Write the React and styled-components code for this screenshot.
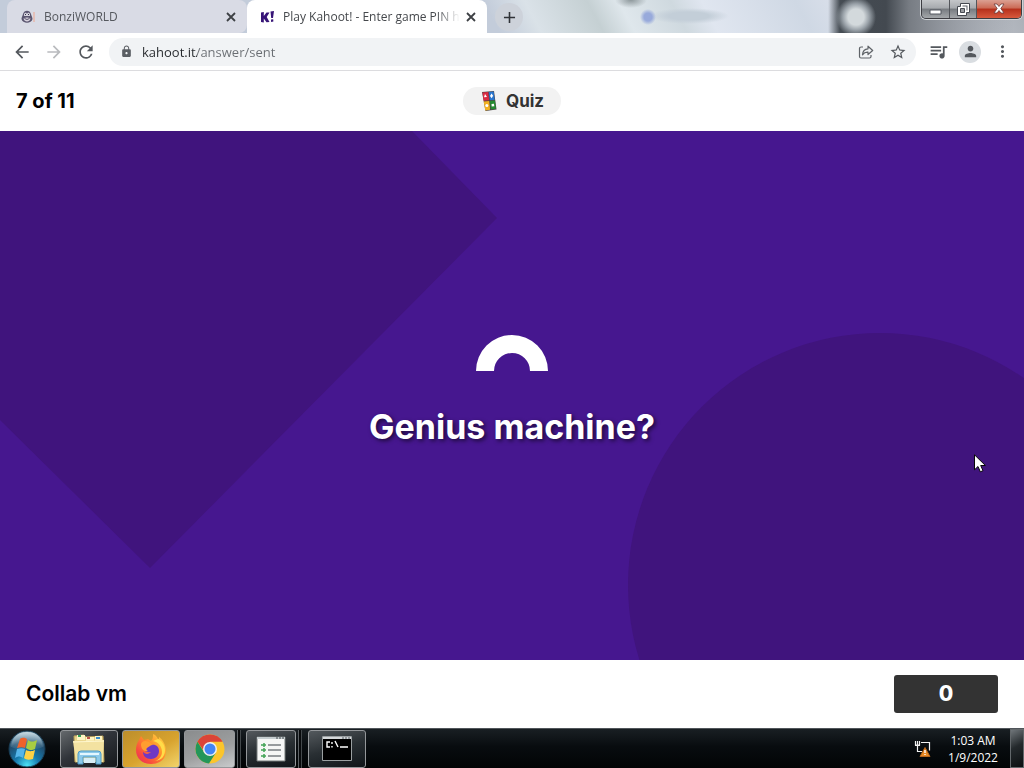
import React from "react";
import styled, { createGlobalStyle } from "styled-components";
import { MdArrowBack, MdArrowForward, MdRefresh, MdLock, MdStarBorder, MdQueueMusic, MdPerson, MdMoreVert, MdAdd } from "react-icons/md";

const GlobalStyle = createGlobalStyle`
  * { box-sizing: border-box; }
  body { margin: 0; font-family: "Open Sans", "Liberation Sans", sans-serif; }
  button { border: 0; padding: 0; margin: 0; background: none; font: inherit; color: inherit; }
  svg { display: block; flex: none; }
  h1, p { margin: 0; }
`;

const Desktop = styled.div`
  display: flex;
  flex-direction: column;
  min-height: 100vh;
  background: #fff;
`;

/* Browser frame */
const TabStrip = styled.div`
  display: flex;
  height: 33px;
  padding-left: 7px;
  background:
    radial-gradient(circle at calc(100% - 376px) 17px, #98aadb 0 4px, transparent 8px),
    radial-gradient(40px 8px at calc(100% - 335px) 16px, #c3ced8 0 50%, transparent),
    radial-gradient(16px 8px at calc(100% - 393px) 0, #8e989c 0, transparent),
    radial-gradient(circle at calc(100% - 168px) 17px, #d3d9dc 0 8px, #9ba3aa 13px, transparent 20px),
    linear-gradient(90deg, transparent calc(100% - 196px), #454c53 calc(100% - 184px), #434950 calc(100% - 138px), #777c83 calc(100% - 115px), transparent calc(100% - 10px)),
    linear-gradient(62deg, #c3ccda 48%, #dae2e8 52%, #c5d0d3 58%, #dfe7ec 61%, #cfd9df 66%, #e0e6f0 69%, #cfd8e4 78%, #dfe3ed 84%, #a9aeb5 100%);
`;
const Tab = styled.div`
  display: flex;
  align-items: center;
  width: 240px;
  min-width: 0;
  padding: 0 9px 0 13px;
  border-radius: 8px 8px 0 0;
  border-bottom-right-radius: ${(p) => (p.$active ? "0" : "8px")};
  background: ${(p) => (p.$active ? "#fff" : "#d9dbe5")};
  color: ${(p) => (p.$active ? "#45484c" : "#55585e")};
`;
const TabTitle = styled.button`
  flex: 1;
  min-width: 0;
  margin-left: 8px;
  overflow: hidden;
  white-space: nowrap;
  text-align: left;
  font-size: 12px;
  line-height: 16px;
  mask-image: linear-gradient(90deg, #000 calc(100% - 28px), transparent calc(100% - 4px));
`;
const TabClose = styled.button`
  display: flex;
  color: #3d4044;
`;
const NewTab = styled.button`
  display: grid;
  place-items: center;
  width: 28px;
  height: 28px;
  margin: 3px 0 0 8px;
  border-radius: 50%;
  background: #cdd2da;
  color: #303338;
`;
const WindowButtons = styled.div`
  display: flex;
  height: 19px;
  margin-left: auto;
  margin-right: 2px;
  border: 1px solid #3d3d42;
  border-top: 0;
  border-radius: 0 0 5px 5px;
  box-shadow: 0 0 0 1px #d0d3d6;
  overflow: hidden;
`;
const WindowButton = styled.button`
  display: grid;
  place-items: center;
  width: ${(p) => (p.$close ? "45px" : "27px")};
  border-left: ${(p) => (p.$first ? "0" : "1px solid #53565b")};
  background: ${(p) => p.$close
    ? "linear-gradient(#dba092, #cb6a55 45%, #b5301b 50%, #d8593d)"
    : "linear-gradient(#c4c6c9, #a7aaae 45%, #777b80 50%, #a4a7aa)"};
`;
const Toolbar = styled.div`
  display: flex;
  align-items: center;
  height: 38px;
  padding: 0 6px;
  border-bottom: 1px solid #dcdcdf;
  background: #fff;
`;
const ToolButton = styled.button`
  display: grid;
  place-items: center;
  width: 32px;
  height: 28px;
  color: ${(p) => (p.$muted ? "#b9bbbe" : "#54585d")};
`;
const NavButtons = styled.div`
  display: flex;
`;
const Address = styled.label`
  display: flex;
  flex: 1;
  align-items: center;
  height: 28px;
  margin: 0 6px 0 7px;
  padding: 0 2px 0 11px;
  border-radius: 14px;
  background: #f1f3f5;
  color: #5b5f64;
`;
const AddressInput = styled.input`
  flex: 1;
  min-width: 0;
  margin-left: 9px;
  padding: 0;
  border: 0;
  outline: 0;
  font: 13px/18px "Open Sans", sans-serif;
  color: transparent;
  background: linear-gradient(90deg, #25282c 55px, #6a6e73 55px);
  background-clip: text;
`;
const Avatar = styled.span`
  display: grid;
  place-items: center;
  width: 22px;
  height: 22px;
  border-radius: 50%;
  background: #d9dde1;
`;

/* Game page */
const GameHeader = styled.header`
  display: grid;
  grid-template-columns: 1fr auto 1fr;
  align-items: center;
  height: 60px;
  padding: 0 16px;
  color: #000;
  font: 700 20px/24px Inter, sans-serif;
`;
const QuizBadge = styled.div`
  display: flex;
  align-items: center;
  gap: 9px;
  height: 28px;
  padding: 0 17px 0 18px;
  border-radius: 14px;
  background: #f2f2f2;
  color: #333;
  font-size: 17px;
`;
const Stage = styled.main`
  position: relative;
  display: flex;
  flex: 1;
  flex-direction: column;
  align-items: center;
  justify-content: center;
  gap: 36px;
  min-height: 320px;
  padding-bottom: 12px;
  overflow: hidden;
  background: #46178f;
`;
const Backdrop = styled.svg`
  position: absolute;
  inset: 0;
  width: 100%;
  height: 100%;
`;
const Spinner = styled.svg`
  position: relative;
  margin-top: 3px;
`;
const StageTitle = styled.h1`
  position: relative;
  color: #fff;
  font: 700 34px/40px Inter, sans-serif;
  text-align: center;
  text-shadow: 2px 2px 4px rgba(0, 0, 0, 0.6);
`;
const Cursor = styled.svg`
  position: absolute;
  top: 61%;
  right: 38px;
`;
const GameFooter = styled.footer`
  display: flex;
  align-items: center;
  justify-content: space-between;
  height: 68px;
  padding: 0 26px;
  color: #000;
  font: 600 21px/24px Inter, sans-serif;
`;
const Score = styled.div`
  width: 104px;
  padding: 7px 0;
  border-radius: 3px;
  background: #333;
  color: #fff;
  font-weight: 800;
  text-align: center;
`;

/* Windows taskbar */
const Taskbar = styled.nav`
  display: flex;
  align-items: center;
  height: 40px;
  border-top: 1px solid #50555a;
  background: linear-gradient(#191f23, #080c0f 45%, #020405);
  color: #fff;
`;
const StartButton = styled.button`
  width: 40px;
  margin: 0 12px 0 8px;
`;
const shades = {
  dark: "linear-gradient(150deg, #65696c, #30343a 45%, #15181b)",
  slate: "linear-gradient(165deg, #54595d, #292f33 48%, #101519)",
  gold: "linear-gradient(150deg, #bc8e2c, #d8a32e 55%, #f2d46b)",
  silver: "linear-gradient(160deg, #8a8c8d, #9d9fa0 55%, #c9cbcc)",
};
const TaskSlot = styled.div`
  display: flex;
  height: 38px;
  width: ${(p) => p.$width}px;
  padding-right: ${(p) => (p.$stacked ? 2 : 0)}px;
  margin-right: ${(p) => p.$gap}px;
  border-right: ${(p) => (p.$stacked ? "1px solid #5d6265" : "0")};
  box-shadow: ${(p) => (p.$stacked ? "2px 0 #080a0c, 3px 0 #43484b" : "none")};
`;
const TaskButton = styled.button`
  display: grid;
  place-items: center;
  flex: 1;
  border: 1px solid #94979a;
  border-radius: 3px;
  background: ${(p) => shades[p.$shade]};
`;
const Tray = styled.div`
  display: flex;
  align-items: center;
  align-self: stretch;
  margin-left: auto;
`;
const Clock = styled.time`
  width: 74px;
  margin-left: 5px;
  font-size: 12px;
  line-height: 17px;
  text-align: center;
`;
const ShowDesktop = styled.button`
  align-self: stretch;
  width: 14px;
  border: 1px solid #63686b;
  background: linear-gradient(150deg, #70767a, #24292c 45%, #0c0f11);
`;

const BonziIcon = () => (
  <svg width="16" height="16" viewBox="0 0 16 16">
    <path d="M1.500 10c0-2 1.200-3 1.500-5 1-4.500 7-4.500 8 0 .3 2 1.500 3 1.500 5-1 5-10 5-11 0Z" fill="#5b5670" />
    <path d="M4 5c1-2 2.500-1.500 3 0 .500-1.500 2-2 3 0v2H4Z" fill="#d5d3dd" />
    <path d="M5.500 5v1M8.500 5v1" stroke="#34304a" />
    <path d="M3.500 9.500c2-1.500 5-1.500 7 0-.5 4-6.500 4-7 0Z" fill="#d8d2de" />
    <path d="M4.500 9.500q2.500 2 5 0" fill="none" stroke="#575269" />
    <path d="M14 3v10" stroke="#e7b7aa" strokeWidth="1.500" />
  </svg>
);
const KahootIcon = () => (
  <svg width="15" height="16" viewBox="0 0 15 16" fill="#371477">
    <path d="M1 3.500 3.800 3v4l2.700-3.500h3L6.700 8l2.800 5-3 .3L3.800 9.500v4l-2.800-.5ZM10.500 2.500l3.500-.5-1 7h-1.800ZM11 10.600l2.200-.3.200 2.200-2.300.4Z" />
  </svg>
);
const CloseTabIcon = () => (
  <svg width="14" height="14" viewBox="0 0 14 14" fill="none" stroke="currentColor" strokeWidth="1.800">
    <path d="m3 3 8 8M11 3l-8 8" />
  </svg>
);
const ShareIcon = () => (
  <svg width="16" height="16" viewBox="0 0 16 16" fill="none" stroke="#5f6368" strokeWidth="1.200" strokeLinejoin="round">
    <path d="M5 3H3.200C2 3 1.500 3.500 1.500 4.600v7.900c0 1 .5 1.500 1.500 1.500h8.500c1 0 1.500-.5 1.500-1.500V11" />
    <path d="M10 2.200 14.700 6.500 10 10.500V8.200C7.500 8 5.800 9 4.500 10.800 4.700 7.300 6.600 5 10 4.800Z" />
  </svg>
);
const CardsIcon = () => (
  <svg width="16" height="20" viewBox="0 0 16 20">
    <path d="m1 1 12-1 2.500 18.500-11 1.500Z" fill="#4b4545" />
    <path d="m1.500 1.500 5.800-.5.8 8.200-5.600.6Z" fill="#d92b43" />
    <path d="m7.800 1 4.800-.4 1.100 8.300-5 .4Z" fill="#2875ce" />
    <path d="m2.700 10.500 5.500-.5.9 8.800-4.800.6Z" fill="#f3b121" />
    <path d="m8.900 10 5-.4 1 8.200-5 .7Z" fill="#268c32" />
    <path d="m4 3 2 3-3 .3Z" fill="#fff" /><path d="m10.500 2.500 1.600 2.200-1.400 2.500L9 5Z" fill="#fff" />
    <circle cx="5.800" cy="14.500" r="1.500" fill="#fff" /><path d="m10.500 13 2.500-.2.300 2.500-2.600.3Z" fill="#fff" />
  </svg>
);
const MinimizeIcon = () => <svg width="13" height="11"><path d="M1 6h11v4H1Z" fill="#fff" stroke="#555961" /></svg>;
const RestoreIcon = () => (
  <svg width="13" height="13" viewBox="0 0 13 13">
    <path d="M3.500.5h9v9h-3v3h-9v-9h3Z" fill="#fff" stroke="#454950" />
    <path d="M5.500 2.500h5v5h-1v-4h-4Z" fill="#5b5f66" />
    <path d="M3.500 5.500h4v4h-4Z" fill="#9a9da1" stroke="#454950" />
  </svg>
);
const CloseWindowIcon = () => (
  <svg width="14" height="12"><path d="m2 1 3 0 2 2.500L9 1h3L8.800 5.500 12 10H9L7 7.500 5 10H2l3.200-4.500Z" fill="#fff" stroke="#6a3b3b" strokeWidth=".8" /></svg>
);
const WindowsOrb = () => (
  <svg width="38" height="38" viewBox="0 0 38 38">
    <defs>
      <radialGradient id="orb" cx=".5" cy=".95" r=".95">
        <stop offset="0" stopColor="#4be3f6" /><stop offset=".35" stopColor="#1679ac" />
        <stop offset=".7" stopColor="#204c6d" /><stop offset="1" stopColor="#8babbc" />
      </radialGradient>
      <linearGradient id="orbShine" x2="0" y2="1"><stop stopColor="#e1edf2" stopOpacity=".75" /><stop offset="1" stopColor="#9fc5d5" stopOpacity=".05" /></linearGradient>
    </defs>
    <circle cx="19" cy="19" r="18" fill="url(#orb)" stroke="#173b52" />
    <path d="M3 17C4 6 11 2 19 2s15 4 16 15c-9 4-23 4-32 0Z" fill="url(#orbShine)" />
    <path d="M12 9c3-2 5-1 7 0l-2 9c-2-1-5-1-8 0Z" fill="#ef622b" />
    <path d="M20 10c3 2 5 2 9 0l-2 9c-4 2-6 1-9-1Z" fill="#a7cd42" />
    <path d="M9 19c3-1 6-1 8 0l-2 9c-3-2-5-2-8 0Z" fill="#55b5e9" />
    <path d="M18 20c2 1 5 2 9 0l-2 9c-4 1-7 1-9-1Z" fill="#ffd245" />
  </svg>
);
const ExplorerIcon = () => (
  <svg width="34" height="32" viewBox="0 0 34 32">
    <path d="M2 3 12 2l2 2 17-1 1 26H3Z" fill="#e8d38a" stroke="#b89f58" />
    <path d="M5 2h8v5H5ZM14 4h8v4h-8ZM23 3h7v5h-7Z" fill="#fff5c4" />
    <path d="M6 2h3v2H6Z" fill="#32a15b" /><path d="M15 4h3v2h-3Z" fill="#bd5549" /><path d="M24 4h4v2h-4Z" fill="#3c8ecb" />
    <path d="m1 8 31-1-1 22H4Z" fill="#f3e2a1" /><path d="m1 9 31-1" stroke="#fff7cf" />
    <path d="M6 31V21q0-3 3-3h17q3 0 3 3v10h-5v-7H11v7Z" fill="#8dcae9" stroke="#4d9ac6" />
    <path d="M8 21h19" stroke="#e3f7ff" strokeWidth="2" />
    <path d="M12 25h11v5H12Z" fill="#d8eef6" />
  </svg>
);
const FirefoxIcon = () => (
  <svg width="32" height="32" viewBox="0 0 32 32">
    <defs><linearGradient id="fire" x1="1" y1="0" x2="0" y2="1"><stop stopColor="#ffe246" /><stop offset=".4" stopColor="#ff922b" /><stop offset=".75" stopColor="#f94a3f" /><stop offset="1" stopColor="#e22570" /></linearGradient></defs>
    <path d="M4 7 6 3l3 4 4-1 3 2c2-2 2-4 2-7 3 1 5 4 5 6 1-1 1-2 1-3 4 3 7 8 7 14 0 8-6 13-15 13S1 25 1 17C1 13 2 10 4 7Z" fill="url(#fire)" />
    <path d="M10 12c2-2 5-1 6 0 5-1 8 2 8 6 0 5-4 8-8 8-5 0-8-3-8-7 3 3 6 2 8 0-4 1-7-1-8-4Z" fill="#6e38c4" />
    <path d="M6 11c1-3 4-4 8-2l4 3c-3 0-4 2-6 3-1 1-1 2 1 3-4 1-7-2-7-7Z" fill="#ff9d30" />
    <path d="M18 8c5 1 9 5 9 11 0 4-3 8-7 9 7-1 10-5 10-11 0-5-3-9-7-11Z" fill="#ffdc48" />
  </svg>
);
const ChromeIcon = () => (
  <svg width="30" height="30" viewBox="0 0 30 30">
    <circle cx="15" cy="15" r="14.500" fill="#fbc52b" />
    <path d="M2.400 7.800A14.500 14.500 0 0 1 27.600 7.800H15L9 17Z" fill="#db4437" />
    <path d="M2.400 7.800A14.500 14.500 0 0 0 14 29.500l7-11-12-.5Z" fill="#23965a" />
    <circle cx="15" cy="15" r="7" fill="#eee" /><circle cx="15" cy="15" r="5.500" fill="#4285f4" />
  </svg>
);
const ListIcon = () => (
  <svg width="30" height="26" viewBox="0 0 30 26">
    <path d="M1 1h28v24H1Z" fill="#f6f7f6" stroke="#747b7b" />
    <path d="M1 2h28" stroke="#c5cdcf" strokeWidth="2" /><path d="M20 2h2m1 0h2m1 0h2" stroke="#42494d" />
    <path d="M12 9h13M12 14h13M12 20h13" stroke="#394046" />
    <path d="M5 9h5M8 7v4M5 14h5M8 12v4M5 20h5M8 18v4" stroke="#43a457" strokeWidth="1.500" />
  </svg>
);
const TerminalIcon = () => (
  <svg width="30" height="25" viewBox="0 0 30 25">
    <path d="M.5.5h29v24H.5Z" fill="#000" stroke="#9ba0a2" /><path d="M1 2h28" stroke="#d5d8da" strokeWidth="2" />
    <path d="M20 2h2m1 0h2m1 0h2" stroke="#535b60" />
    <path d="M8 6H5v5h3M10 6v2M10 10v1.500M13 5l3 6M18 11h8" fill="none" stroke="#fff" strokeWidth="1.400" />
  </svg>
);
const NetworkIcon = () => (
  <svg width="17" height="18" viewBox="0 0 17 18" fill="none" stroke="#f2f2f2">
    <path d="M1.500 1v4h4V1M3.500 1v11M1 5.500h5M7 2.500h8.500v8M3.500 11.500H8" strokeWidth="1.200" />
    <path d="m11 7.500 5 9H6Z" fill="#e88a25" stroke="#b5651b" /><path d="M11 10v3M11 14v1" stroke="#fff" strokeWidth="1.400" />
  </svg>
);

export default function App() {
  return (
    <>
      <GlobalStyle />
      <Desktop>
        <TabStrip>
          <Tab>
            <BonziIcon />
            <TabTitle>BonziWORLD</TabTitle>
            <TabClose aria-label="Close BonziWORLD"><CloseTabIcon /></TabClose>
          </Tab>
          <Tab $active>
            <KahootIcon />
            <TabTitle>Play Kahoot! - Enter game PIN here!</TabTitle>
            <TabClose aria-label="Close Kahoot"><CloseTabIcon /></TabClose>
          </Tab>
          <NewTab aria-label="New tab"><MdAdd size={19} /></NewTab>
          <WindowButtons>
            <WindowButton $first aria-label="Minimize"><MinimizeIcon /></WindowButton>
            <WindowButton aria-label="Restore"><RestoreIcon /></WindowButton>
            <WindowButton $close aria-label="Close window"><CloseWindowIcon /></WindowButton>
          </WindowButtons>
        </TabStrip>
        <Toolbar>
          <NavButtons>
            <ToolButton aria-label="Back"><MdArrowBack size={20} /></ToolButton>
            <ToolButton $muted aria-label="Forward"><MdArrowForward size={20} /></ToolButton>
            <ToolButton aria-label="Reload"><MdRefresh size={20} /></ToolButton>
          </NavButtons>
          <Address>
            <MdLock size={13} />
            <AddressInput aria-label="Address" defaultValue="kahoot.it/answer/sent" />
            <ToolButton aria-label="Share"><ShareIcon /></ToolButton>
            <ToolButton aria-label="Bookmark"><MdStarBorder size={18} /></ToolButton>
          </Address>
          <ToolButton aria-label="Media"><MdQueueMusic size={21} /></ToolButton>
          <ToolButton aria-label="Profile"><Avatar><MdPerson size={17} /></Avatar></ToolButton>
          <ToolButton aria-label="Menu"><MdMoreVert size={19} /></ToolButton>
        </Toolbar>
        <GameHeader>
          <span>7 of 11</span>
          <QuizBadge><CardsIcon />Quiz</QuizBadge>
        </GameHeader>
        <Stage>
          <Backdrop viewBox="0 0 1024 529" preserveAspectRatio="xMidYMid slice" aria-hidden="true">
            <g fill="#40147d"><path d="M0 0H412L497 87 150 437 0 289Z" /><circle cx="880" cy="454" r="252" /></g>
          </Backdrop>
          <Spinner width="72" height="36" viewBox="0 0 72 36" aria-label="Loading"><path d="M0 36a36 36 0 0 1 72 0H54a18 18 0 0 0-36 0Z" fill="#fff" /></Spinner>
          <StageTitle>Genius machine?</StageTitle>
          <Cursor width="12" height="19" viewBox="0 0 12 19" aria-hidden="true"><path d="M.5.8v15l3.500-3.300 2.300 5.300 2.700-1.100-2.300-5.200h4.700Z" fill="#fff" stroke="#080808" /></Cursor>
        </Stage>
        <GameFooter>
          <span>Collab vm</span>
          <Score>0</Score>
        </GameFooter>
        <Taskbar>
          <StartButton aria-label="Start"><WindowsOrb /></StartButton>
          <TaskSlot $width={58} $gap={4}><TaskButton $shade="dark" aria-label="Explorer"><ExplorerIcon /></TaskButton></TaskSlot>
          <TaskSlot $width={58} $gap={4}><TaskButton $shade="gold" aria-label="Firefox"><FirefoxIcon /></TaskButton></TaskSlot>
          <TaskSlot $width={54} $gap={8} $stacked><TaskButton $shade="silver" aria-label="Chrome"><ChromeIcon /></TaskButton></TaskSlot>
          <TaskSlot $width={53} $gap={9} $stacked><TaskButton $shade="slate" aria-label="Task list"><ListIcon /></TaskButton></TaskSlot>
          <TaskSlot $width={58} $gap={0}><TaskButton $shade="slate" aria-label="Command prompt"><TerminalIcon /></TaskButton></TaskSlot>
          <Tray>
            <NetworkIcon />
            <Clock dateTime="2022-01-09T01:03">1:03 AM<br />1/9/2022</Clock>
            <ShowDesktop aria-label="Show desktop" />
          </Tray>
        </Taskbar>
      </Desktop>
    </>
  );
}
